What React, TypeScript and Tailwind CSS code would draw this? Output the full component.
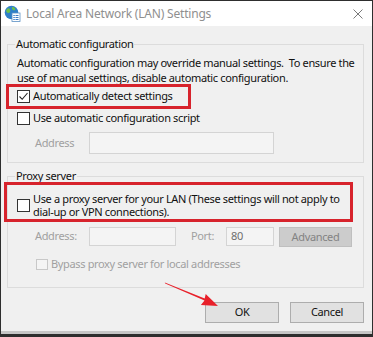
import React from "react";

const font = { fontFamily: '"Noto Sans", "Liberation Sans", sans-serif' };

const Check = ({ checked = false, disabled = false }: { checked?: boolean; disabled?: boolean }) => (
  <div
    className={
      disabled
        ? "w-[12px] h-[11px] shrink-0 border border-[#c8c8c8] bg-[#f4f4f4]"
        : "w-[13px] h-[13px] shrink-0 border border-[#333333] bg-white flex items-center justify-center"
    }
  >
    {checked && (
      <svg width="11" height="11" viewBox="0 0 11 11">
        <path d="M1.5 5.5 L4.2 8.3 L9.5 2" fill="none" stroke="#222" strokeWidth="1.1" />
      </svg>
    )}
  </div>
);

const TitleIcon = () => (
  <svg width="17" height="17" viewBox="0 0 17 17">
    <circle cx="7.5" cy="7.5" r="6.8" fill="#2f7fc8" />
    <path d="M3 4 C5 2 7 5 6 7 C5 9 3 8 2 6 Z" fill="#6bbf4a" />
    <path d="M8 2 C10 1.5 12 3 11 5 C10 6 9 5 8 4 Z" fill="#6bbf4a" />
    <rect x="8" y="8" width="8" height="8.5" fill="#ffffff" stroke="#5a8fc4" strokeWidth="0.8" />
    <rect x="9.3" y="10" width="1.5" height="1" fill="#3e7bc4" />
    <rect x="11.5" y="10" width="3" height="1" fill="#3e7bc4" />
    <rect x="9.3" y="12" width="1.5" height="1" fill="#3e7bc4" />
    <rect x="11.5" y="12" width="3" height="1" fill="#3e7bc4" />
    <rect x="9.3" y="14" width="1.5" height="1" fill="#3e7bc4" />
    <rect x="11.5" y="14" width="3" height="1" fill="#3e7bc4" />
  </svg>
);

export default function App() {
  return (
    <div
      style={font}
      className="relative w-[373px] h-[337px] overflow-hidden bg-[#f0f0f0] border-x border-t border-[#2e2e2e] flex flex-col text-[11px] tracking-[-0.35px] text-[#111] whitespace-nowrap"
    >
      {/* title bar */}
      <div className="h-[25px] bg-white flex items-center pl-[3px] pr-[9px] shrink-0">
        <TitleIcon />
        <span className="ml-[5px] text-[12px] tracking-[-0.2px] text-[#8f8f8f] leading-none">
          Local Area Network (LAN) Settings
        </span>
        <svg className="ml-auto" width="10" height="10" viewBox="0 0 10 10">
          <path d="M0.5 0.5 L9.5 9.5 M9.5 0.5 L0.5 9.5" stroke="#7a7a7a" strokeWidth="1" />
        </svg>
      </div>

      <div className="flex-1 flex flex-col pl-[6px] pr-[8px]">
        <fieldset className="mt-[10px] w-[357px] border border-[#dcdcdc] pl-[9px] pb-[8px]">
          <legend className="-ml-[2px] px-[1px] leading-[16px]">Automatic configuration</legend>
          <p className="mt-[3px] leading-[15px]">
            Automatic configuration may override manual settings.&nbsp; To ensure the
            <br />
            use of manual settings, disable automatic configuration.
          </p>
          <div className="mt-[5px] h-[13px] flex items-center gap-[3px]">
            <Check checked />
            <span>Automatically detect settings</span>
          </div>
          <div className="mt-[9px] h-[13px] flex items-center gap-[3px]">
            <Check />
            <span>Use automatic configuration script</span>
          </div>
          <div className="mt-[7px] flex items-center">
            <span className="ml-[18px] w-[54px] text-[#a0a0a0]">Address</span>
            <div className="w-[185px] h-[22px] border border-[#d4d4d4] bg-[#f4f4f4]" />
          </div>
        </fieldset>

        <fieldset className="mt-[5px] w-[357px] border border-[#dcdcdc] pl-[9px] pb-[14px]">
          <legend className="-ml-[2px] px-[1px] leading-[16px]">Proxy server</legend>
          <div className="mt-[8px] flex items-center gap-[3px]">
            <Check />
            <span className="leading-[13px]">
              Use a proxy server for your LAN (These settings will not apply to
              <br />
              dial-up or VPN connections).
            </span>
          </div>
          <div className="mt-[9px] flex items-start text-[#a0a0a0]">
            <span className="ml-[18px] w-[54px] h-[19px] flex items-center">Address:</span>
            <div className="w-[87px] h-[19px] border border-[#d4d4d4] bg-[#f4f4f4]" />
            <span className="ml-[15px] w-[35px] h-[19px] flex items-center">Port:</span>
            <div className="w-[48px] h-[19px] border border-[#d4d4d4] bg-[#f4f4f4] pl-[4px] flex items-center text-[#6e6e6e]">
              80
            </div>
            <div className="ml-[5px] w-[73px] h-[20px] border border-[#bfbfbf] bg-[#cccccc] flex items-center justify-center text-[#838383]">
              Advanced
            </div>
          </div>
          <div className="mt-[9px] flex items-center gap-[3px] text-[#a0a0a0]">
            <div className="ml-[19px]">
              <Check disabled />
            </div>
            <span>Bypass proxy server for local addresses</span>
          </div>
        </fieldset>

        <div className="mt-[14px] flex justify-end gap-[11px]">
          <button className="w-[74px] h-[21px] border border-[#adadad] bg-[#e1e1e1] text-[#111]">OK</button>
          <button className="w-[74px] h-[21px] border border-[#adadad] bg-[#e1e1e1] text-[#111]">Cancel</button>
        </div>
      </div>

      <div className="h-[3px] bg-[#c6c6c6] shrink-0" />
      <div className="h-[3px] bg-[#2e2e2e] shrink-0" />

      {/* annotations */}
      <div className="absolute left-[5px] top-[83px] w-[185px] h-[25px] border-[3px] border-[#d7232c]" />
      <div className="absolute left-[3px] top-[181px] w-[349px] h-[40px] border-[3px] border-[#d7232c]" />
      <svg className="absolute left-0 top-0 pointer-events-none" width="373" height="337">
        <polygon
          points="163.8,281.5 164.2,282.5 203.5,299.5 199.9,304.1 217,305 204.7,293.1 203.7,297.5"
          fill="#e8202a"
        />
      </svg>
    </div>
  );
}
